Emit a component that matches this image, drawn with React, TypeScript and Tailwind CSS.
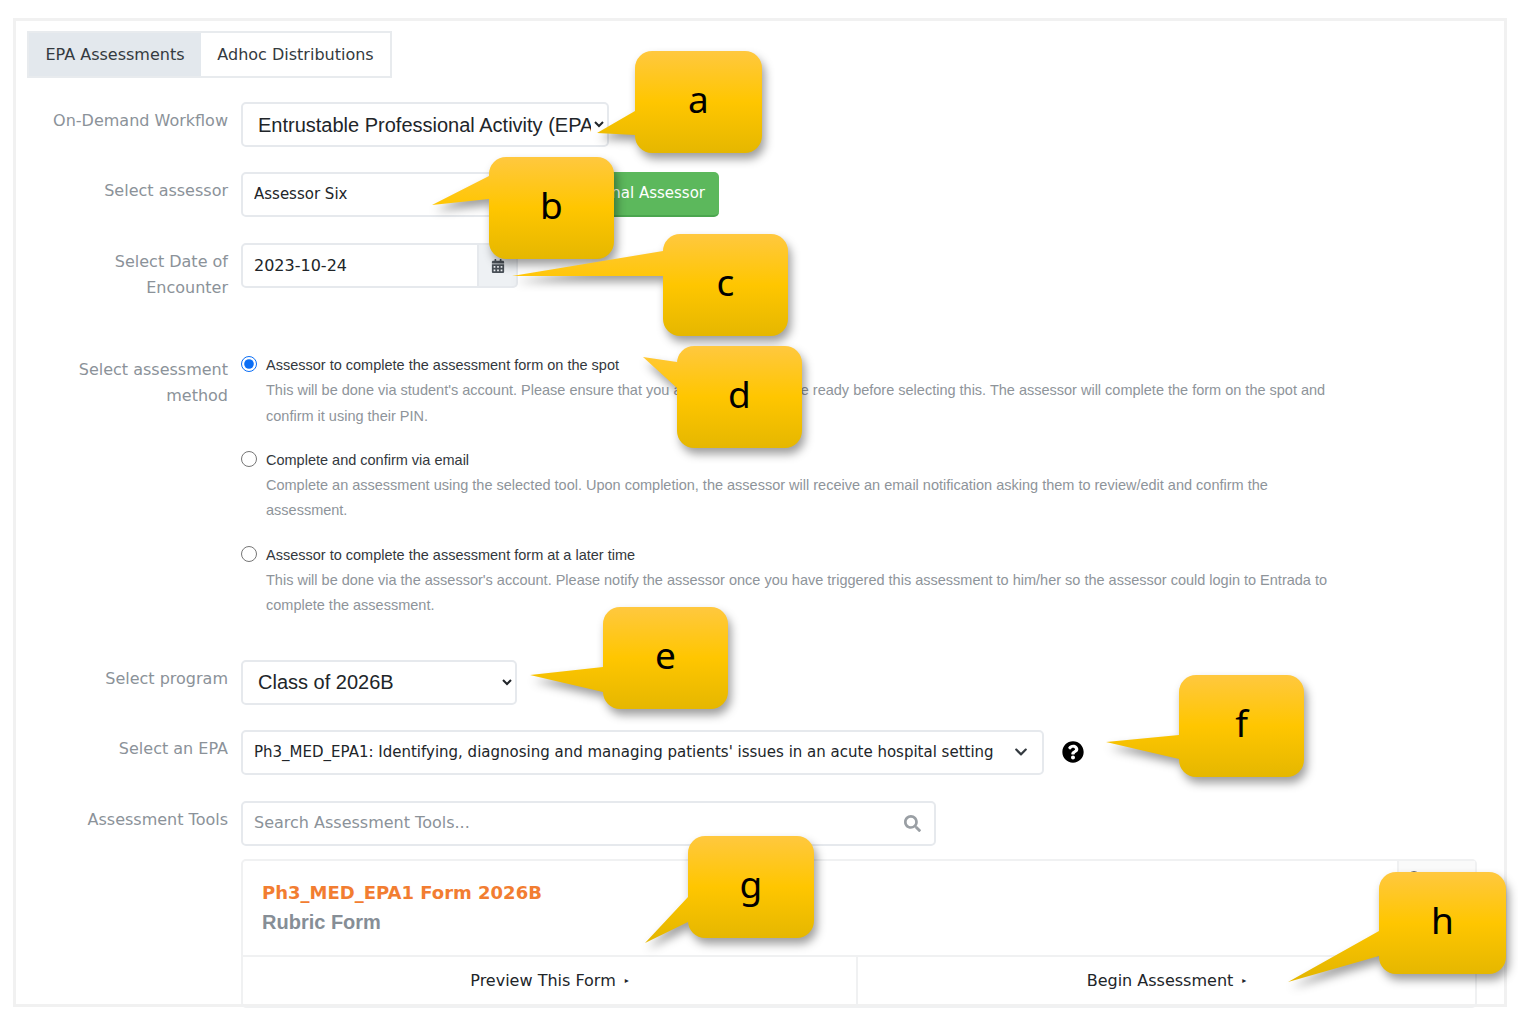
import React from 'react';
import { FaCalendarAlt, FaChevronDown, FaQuestionCircle, FaSearch, FaRegClock } from 'react-icons/fa';

type RowProps = {
  label: React.ReactNode;
  className?: string;
  children: React.ReactNode;
};

const verdana = "font-['DejaVu_Sans',sans-serif]";
const arial = "font-['Liberation_Sans',sans-serif]";

const Row = ({ label, className = '', children }: RowProps) => (
  <div className={`flex ${className}`}>
    <label className={`${verdana} w-[201px] shrink-0 pt-[6px] text-right text-[16px] leading-[26px] text-[#8b9299]`}>
      {label}
    </label>
    <div className="ml-[13px] min-w-0 flex-1">{children}</div>
  </div>
);

type CalloutProps = {
  letter: string;
  className: string;
  w: number;
  y1: number;
  y2: number;
  tipX: number;
  tipY: number;
};

const Callout = ({ letter, className, w, y1, y2, tipX, tipY }: CalloutProps) => {
  const h = 102;
  const r = 17;
  const d = `M${r} 0H${w - r}A${r} ${r} 0 0 1 ${w} ${r}V${h - r}A${r} ${r} 0 0 1 ${w - r} ${h}H${r}A${r} ${r} 0 0 1 0 ${h - r}V${y2}L${tipX} ${tipY}L0 ${y1}V${r}A${r} ${r} 0 0 1 ${r} 0Z`;
  return (
    <div className={`absolute h-[102px] ${className}`}>
      <svg
        className="absolute left-0 top-0 overflow-visible drop-shadow-[3px_6px_5px_rgba(0,0,0,0.38)]"
        width={w}
        height={h}
      >
        <defs>
          <linearGradient id={`gold-${letter}`} gradientUnits="userSpaceOnUse" x1="0" y1="0" x2="0" y2={h}>
            <stop offset="0" stopColor="#ffc83f" />
            <stop offset="0.5" stopColor="#ffc600" />
            <stop offset="1" stopColor="#e5b700" />
          </linearGradient>
        </defs>
        <path d={d} fill={`url(#gold-${letter})`} />
      </svg>
      <div className="relative flex h-full items-center justify-center pb-[8px] font-['Noto_Sans',sans-serif] text-[37px] leading-none text-black">
        {letter}
      </div>
    </div>
  );
};

const fieldBorder = 'border-2 border-[#e6e9ed] bg-white';

const Option = ({ checked, title, lines }: { checked?: boolean; title: string; lines: string[] }) => (
  <div className="flex">
    <input
      type="radio"
      name="method"
      defaultChecked={checked}
      className="mt-[3px] h-[16px] w-[16px] shrink-0 accent-[#0b6ef5]"
    />
    <div className={`${arial} ml-[9px] text-[14.5px] leading-[25.3px]`}>
      <div className="text-[#33383d]">{title}</div>
      {lines.map((line) => (
        <div key={line} className="whitespace-nowrap text-[#8e949a]">
          {line}
        </div>
      ))}
    </div>
  </div>
);

const App = () => {
  return (
    <div className="relative h-[1016px] w-[1518px] overflow-hidden bg-white pl-[13px] pt-[18px]">
      <div className="h-[989px] w-[1494px] border-[3px] border-[#f1f1f1] pl-[11px] pt-[10px]">
        {/* Tabs */}
        <div className={`${verdana} flex h-[47px] w-[365px] border-2 border-[#e8ebee] text-[16px] text-[#343a40]`}>
          <div className="flex w-[172px] items-center justify-center bg-[#e3e8ed]">EPA Assessments</div>
          <div className="flex flex-1 items-center justify-center">Adhoc Distributions</div>
        </div>

        <Row label="On-Demand Workflow" className="mt-[24px]">
          <select
            defaultValue="epa"
            className={`${fieldBorder} ${arial} h-[45px] w-[368px] rounded-[5px] pl-[11px] text-[20px] text-[#212529]`}
          >
            <option value="epa">Entrustable Professional Activity (EPA)</option>
          </select>
        </Row>

        <Row label="Select assessor" className="mt-[25px]">
          <div className="flex h-[45px] w-[478px]">
            <input
              readOnly
              value="Assessor Six"
              className={`${fieldBorder} ${verdana} min-w-0 flex-1 rounded-l-[5px] pl-[11px] text-[15px] text-[#212529] outline-none`}
            />
            <button className={`${verdana} rounded-r-[5px] border-b-2 border-[#4ba64f] bg-[#5cb85c] px-[14px] text-[15px] text-white`}>
              Add External Assessor
            </button>
          </div>
        </Row>

        <Row
          label={
            <>
              Select Date of
              <br />
              Encounter
            </>
          }
          className="mt-[26px]"
        >
          <div className="flex h-[45px] w-[277px]">
            <input
              readOnly
              value="2023-10-24"
              className={`${fieldBorder} ${verdana} min-w-0 flex-1 rounded-l-[5px] pl-[11px] text-[16px] text-[#212529] outline-none`}
            />
            <div className="flex w-[39px] items-center justify-center rounded-r-[5px] border-2 border-l-0 border-[#e6e9ed] bg-[#eef1f4]">
              <FaCalendarAlt className="text-[14px] text-[#495057]" />
            </div>
          </div>
        </Row>

        <Row
          label={
            <>
              Select assessment
              <br />
              method
            </>
          }
          className="mt-[50px]"
        >
          <div className="flex flex-col gap-[19px] pt-[2px]">
            <Option
              checked
              title="Assessor to complete the assessment form on the spot"
              lines={[
                "This will be done via student's account. Please ensure that you and the assessor are ready before selecting this. The assessor will complete the form on the spot and",
                'confirm it using their PIN.',
              ]}
            />
            <Option
              title="Complete and confirm via email"
              lines={[
                'Complete an assessment using the selected tool. Upon completion, the assessor will receive an email notification asking them to review/edit and confirm the',
                'assessment.',
              ]}
            />
            <Option
              title="Assessor to complete the assessment form at a later time"
              lines={[
                "This will be done via the assessor's account. Please notify the assessor once you have triggered this assessment to him/her so the assessor could login to Entrada to",
                'complete the assessment.',
              ]}
            />
          </div>
        </Row>

        <Row label="Select program" className="mt-[41px]">
          <select
            defaultValue="2026b"
            className={`${fieldBorder} ${arial} h-[45px] w-[276px] rounded-[5px] pl-[11px] text-[20px] text-[#212529]`}
          >
            <option value="2026b">Class of 2026B</option>
          </select>
        </Row>

        <Row label="Select an EPA" className="mt-[25px]">
          <div className="flex items-center">
            <div className={`${fieldBorder} ${verdana} flex h-[45px] w-[803px] items-center justify-between rounded-[5px] pl-[11px] pr-[14px] text-[15px] text-[#212529]`}>
              <span className="whitespace-nowrap">
                Ph3_MED_EPA1: Identifying, diagnosing and managing patients' issues in an acute hospital setting
              </span>
              <FaChevronDown className="text-[14px] text-[#343a40]" />
            </div>
            <FaQuestionCircle className="ml-[18px] text-[22px] text-black" />
          </div>
        </Row>

        <Row label="Assessment Tools" className="mt-[26px]">
          <div className={`${fieldBorder} ${verdana} flex h-[45px] w-[695px] items-center justify-between rounded-[5px] pl-[11px] pr-[13px] text-[16px] text-[#8b9299]`}>
            <span>Search Assessment Tools...</span>
            <FaSearch className="text-[17px] text-[#9a9fa4]" />
          </div>

          {/* Form card */}
          <div className="relative mt-[13px] h-[149px] w-[1236px] rounded-[5px] border-2 border-[#f0f1f2]">
            <div className={`${verdana} absolute right-0 top-0 flex h-[30px] w-[78px] items-start justify-center gap-[5px] border-b border-l-2 border-[#f0f1f2] bg-[#fafafa] pt-[7px] text-[14px] text-[#343a40]`}>
              <FaRegClock className="mt-[3px] text-[14px]" />
              04:00
            </div>
            <div className="h-[94px] pl-[19px] pt-[19px]">
              <div className={`${verdana} text-[18px] font-bold leading-[26px] text-[#f27d31]`}>Ph3_MED_EPA1 Form 2026B</div>
              <div className={`${arial} mt-[3px] text-[20px] font-bold leading-[26px] text-[#868e96]`}>Rubric Form</div>
            </div>
            <div className={`${verdana} flex h-[51px] border-t-2 border-[#f0f1f2] text-[16px] text-[#212529]`}>
              <div className="flex w-[615px] items-center justify-center gap-[9px] border-r-2 border-[#f0f1f2]">
                Preview This Form <span className="text-[8px]">▸</span>
              </div>
              <div className="flex flex-1 items-center justify-center gap-[9px]">
                Begin Assessment <span className="text-[8px]">▸</span>
              </div>
            </div>
          </div>
        </Row>
      </div>

      {/* Annotation callouts */}
      <Callout letter="a" className="left-[635px] top-[51px] w-[127px]" w={127} y1={60} y2={84} tipX={-38} tipY={82} />
      <Callout letter="b" className="left-[489px] top-[157px] w-[125px]" w={125} y1={19} y2={42} tipX={-57} tipY={48} />
      <Callout letter="c" className="left-[663px] top-[234px] w-[125px]" w={125} y1={17} y2={42} tipX={-151} tipY={42} />
      <Callout letter="d" className="left-[677px] top-[346px] w-[125px]" w={125} y1={16} y2={42} tipX={-34} tipY={11} />
      <Callout letter="e" className="left-[603px] top-[607px] w-[125px]" w={125} y1={60} y2={85} tipX={-73} tipY={68} />
      <Callout letter="f" className="left-[1179px] top-[675px] w-[125px]" w={125} y1={60} y2={84} tipX={-73} tipY={67} />
      <Callout letter="g" className="left-[688px] top-[836px] w-[126px]" w={126} y1={61} y2={86} tipX={-43} tipY={107} />
      <Callout letter="h" className="left-[1379px] top-[872px] w-[127px]" w={127} y1={59} y2={84} tipX={-91} tipY={110} />
    </div>
  );
};

export default App;
